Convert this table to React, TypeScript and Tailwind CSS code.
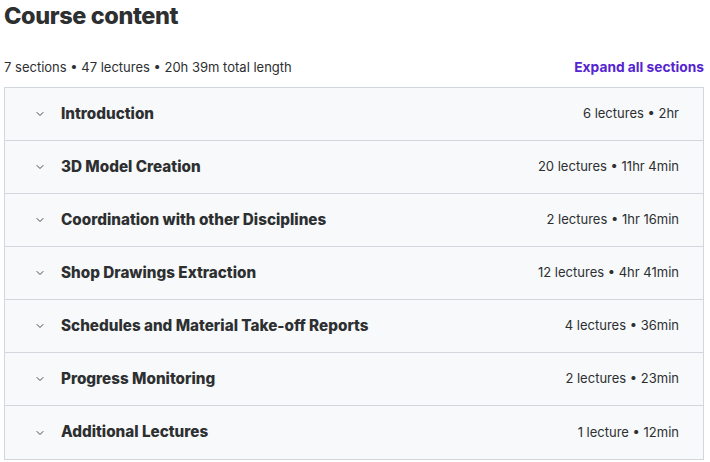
import { ChevronDown } from "lucide-react";

const sections = [
  { title: "Introduction", meta: "6 lectures • 2hr" },
  { title: "3D Model Creation", meta: "20 lectures • 11hr 4min" },
  { title: "Coordination with other Disciplines", meta: "2 lectures • 1hr 16min" },
  { title: "Shop Drawings Extraction", meta: "12 lectures • 4hr 41min" },
  { title: "Schedules and Material Take-off Reports", meta: "4 lectures • 36min" },
  { title: "Progress Monitoring", meta: "2 lectures • 23min" },
  { title: "Additional Lectures", meta: "1 lecture • 12min" },
];

export default function App() {
  return (
    <div className="min-h-screen bg-white pl-1 pr-[6px] text-[#2d2f31] font-['Inter',sans-serif]">
      <h2 className="text-[23.5px] leading-[32px] font-extrabold tracking-[-0.4px]">Course content</h2>

      <div className="mt-[20px] flex items-end justify-between h-[30px] pb-[6px]">
        <span className="text-[13px] leading-[18px]">7 sections • 47 lectures • 20h 39m total length</span>
        <button className="text-[13.75px] leading-[18px] font-bold text-[#5624d0]">Expand all sections</button>
      </div>

      <div className="mt-[5px] border border-[#d1d7dc]">
        {sections.map((s, i) => (
          <div
            key={i}
            className={`flex items-center h-[53px] bg-[#f7f9fa] pl-[29px] pr-6 ${
              i < sections.length - 1 ? "border-b border-[#d1d7dc]" : ""
            }`}
          >
            <ChevronDown size={12} strokeWidth={1.75} className="text-[#2d2f31]" />
            <span className="ml-[15px] text-[15.25px] font-extrabold">{s.title}</span>
            <span className="ml-auto text-[13px]">{s.meta}</span>
          </div>
        ))}
      </div>
    </div>
  );
}
